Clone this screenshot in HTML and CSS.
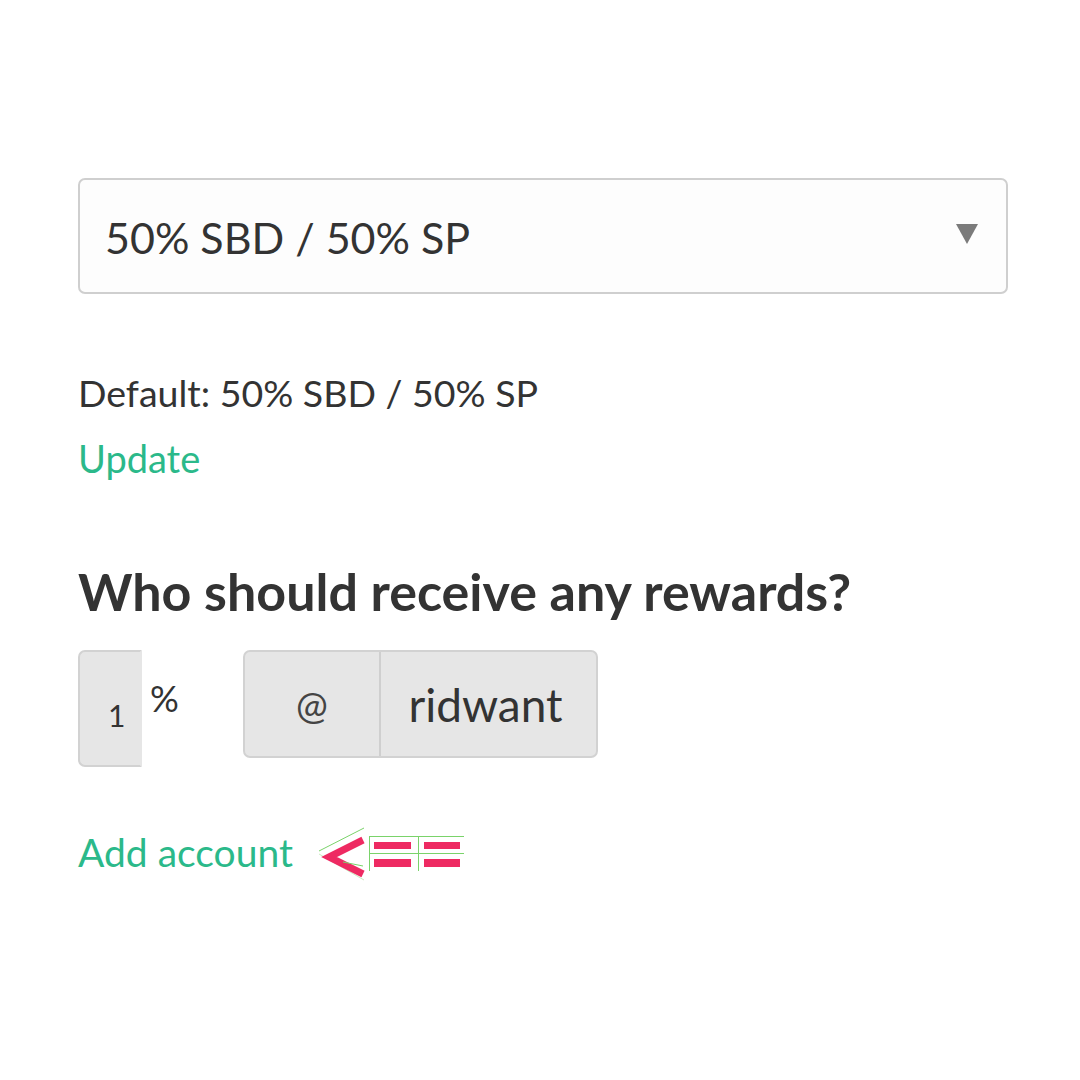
FILE: index.html
```html
<!DOCTYPE html>
<html>
<head>
<meta charset="utf-8">
<link rel="stylesheet" href="styles.css">
</head>
<body>
<main class="page">
  <div class="select">
    <span class="select-text">50% SBD / 50% SP</span>
    <span class="caret"></span>
  </div>
  <p class="default">Default: 50% SBD / 50% SP</p>
  <a class="link update">Update</a>
  <h2 class="heading">Who should receive any rewards?</h2>
  <div class="bene-row">
    <div class="pct-wrap">
      <div class="pct-input"><span class="pct-val">1</span></div>
      <span class="pct-sign">%</span>
    </div>
    <div class="acct">
      <div class="at">@</div>
      <div class="name">ridwant</div>
    </div>
  </div>
  <div class="add-row">
    <a class="link add">Add account</a>
    <svg class="arrow" width="150" height="60" viewBox="0 0 150 60">
      <line x1="2" y1="27" x2="47" y2="4" stroke="#7ad36a" stroke-width="1"/>
      <line x1="2" y1="30" x2="47" y2="56" stroke="#c9ecc0" stroke-width="1"/>
      <polyline points="46,16 12,33 46,50" fill="none" stroke="#ee2a62" stroke-width="7" stroke-linejoin="miter"/>
      <line x1="26" y1="38" x2="46" y2="42" stroke="#7ad36a" stroke-width="1"/>
      <rect x="52" y="12" width="95" height="1" fill="#7ad36a"/>
      <rect x="52" y="29" width="95" height="1" fill="#7ad36a"/>
      <rect x="52" y="12" width="1" height="35" fill="#7ad36a"/>
      <rect x="101" y="12" width="1" height="35" fill="#7ad36a"/>
      <rect x="57" y="18" width="37" height="7" fill="#ee2a62"/>
      <rect x="107" y="18" width="36" height="7" fill="#ee2a62"/>
      <rect x="57" y="35" width="37" height="8" fill="#ee2a62"/>
      <rect x="107" y="35" width="36" height="8" fill="#ee2a62"/>
    </svg>
  </div>
</main>
</body>
</html>
```
FILE: styles.css
```css
* { box-sizing: border-box; }
html, body { margin: 0; padding: 0; background: #ffffff; }
body {
  font-family: "Lato", "Noto Sans", sans-serif;
  color: #333333;
  width: 1080px;
  height: 1080px;
  overflow: hidden;
}
.page {
  padding: 178px 72px 0 78px;
  display: flex;
  flex-direction: column;
}
.select {
  width: 930px;
  height: 116px;
  border: 2px solid #cfcfcf;
  border-radius: 7px;
  background: #fdfdfd;
  display: flex;
  align-items: center;
  justify-content: space-between;
  padding: 0 28px 0 25px;
}
.select-text {
  font-size: 43px;
  color: #333;
  margin-top: 2px;
}
.caret {
  width: 0; height: 0;
  border-left: 11px solid transparent;
  border-right: 11px solid transparent;
  border-top: 20px solid #7b7b7b;
  margin-bottom: 4px;
}
.default {
  margin: 75px 0 0 0;
  font-size: 37.5px;
  line-height: 48px;
  color: #333;
}
.link { color: #2bb98a; text-decoration: none; display: block; }
.update {
  font-size: 38px;
  line-height: 48px;
  margin-top: 17px;
}
.heading {
  margin: 79px 0 0 0;
  font-size: 52px;
  font-weight: 700;
  line-height: 60px;
  color: #333;
}
.bene-row {
  display: flex;
  align-items: flex-start;
  margin-top: 29px;
}
.pct-wrap { display: flex; align-items: flex-start; width: 165px; }
.pct-input {
  width: 64px;
  height: 117px;
  background: #e6e6e6;
  border: 2px solid #d2d2d2;
  border-right-color: #e6e6e6;
  border-radius: 7px 0 0 7px;
  display: flex;
  align-items: center;
  padding-left: 28px;
  padding-top: 12px;
}
.pct-val { font-size: 30px; color: #333; }
.pct-sign { font-size: 36px; margin-left: 8px; margin-top: 26px; color: #333; }
.acct {
  display: flex;
  height: 108px;
  border: 2px solid #d2d2d2;
  border-radius: 7px;
  background: #e6e6e6;
  overflow: hidden;
}
.at {
  width: 136px;
  display: flex; align-items: center; justify-content: center;
  font-size: 38px; color: #444;
  border-right: 2px solid #cfcfcf;
}
.name {
  width: 215px;
  display: flex; align-items: center; justify-content: center;
  font-size: 46px; color: #333;
  padding-right: 6px;
}
.add-row {
  display: flex;
  align-items: center;
  margin-top: 53px;
}
.add { font-size: 39px; line-height: 48px; }
.arrow { margin-left: 24px; margin-top: 4px; }
```
